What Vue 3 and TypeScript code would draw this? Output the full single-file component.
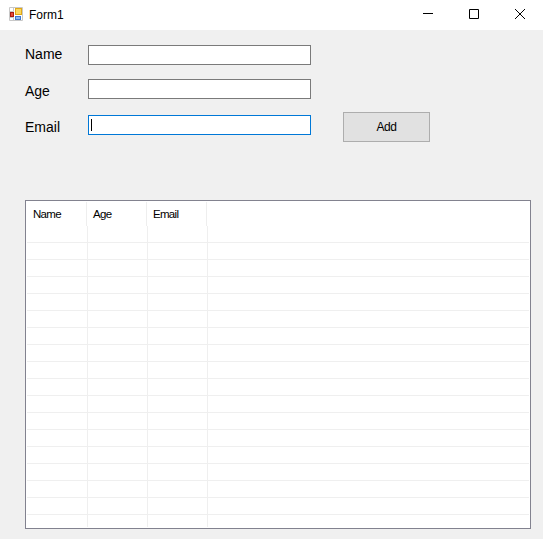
<template>
  <div class="window">
    <div class="titlebar">
      <svg class="app-icon" width="16" height="16" viewBox="0 0 16 16">
        <path d="M1.5 1.5h13v13h-13z M1.5 5.5h4 M5.5 1.5v4 M1.5 11.5h4 M5.5 11.5v3" fill="none" stroke="#c8c8c8" />
        <rect x="7" y="2" width="7" height="7" fill="#e0a818" />
        <rect x="8" y="3" width="5" height="5" fill="#fbd75e" />
        <rect x="2" y="6" width="4" height="5" fill="#a81c14" />
        <rect x="3" y="7" width="2" height="3" fill="#e84a36" />
        <rect x="7" y="10" width="6" height="4" fill="#3f78d0" />
        <rect x="8" y="11" width="4" height="2" fill="#8fb8ee" />
      </svg>
      <span class="title">Form1</span>
      <div class="controls">
        <button class="control">
          <svg width="12" height="12" viewBox="0 0 12 12"><path d="M1 5.5h10" stroke="#000" fill="none" /></svg>
        </button>
        <button class="control">
          <svg width="12" height="12" viewBox="0 0 12 12"><path d="M1.5 1.5h9v9h-9z" stroke="#000" fill="none" /></svg>
        </button>
        <button class="control">
          <svg width="12" height="12" viewBox="0 0 12 12"><path d="M1 1l10 10M11 1L1 11" stroke="#000" fill="none" /></svg>
        </button>
      </div>
    </div>

    <div class="content">
      <div class="form">
        <div v-for="field in fields" :key="field" class="field">
          <label class="label">{{ field }}</label>
          <div class="input" :class="{ focused: field === 'Email' }">
            <span v-if="field === 'Email'" class="caret"></span>
          </div>
          <button v-if="field === 'Email'" class="add">Add</button>
        </div>
      </div>

      <div class="list">
        <div class="list-inner">
          <div class="list-head">
            <div v-for="field in fields" :key="field" class="head-cell">{{ field }}</div>
          </div>
          <div v-for="row in 18" :key="row" class="list-row">
            <div v-for="col in 3" :key="col" class="row-cell"></div>
          </div>
        </div>
      </div>
    </div>
  </div>
</template>

<script setup lang="ts">
const fields: string[] = ["Name", "Age", "Email"];
</script>

<style scoped>
.window {
  width: 543px;
  height: 539px;
  display: flex;
  flex-direction: column;
  background: #f0f0f0;
  font-family: "Liberation Sans", Arial, sans-serif;
  color: #000;
  overflow: hidden;
}

.titlebar {
  height: 30px;
  flex: none;
  display: flex;
  align-items: center;
  background: #fff;
  padding-left: 8px;
}

.app-icon {
  flex: none;
  margin-top: -2px;
}

.title {
  margin-left: 5px;
  font-size: 12px;
  margin-top: -1px;
}

.controls {
  margin-left: auto;
  display: flex;
  height: 100%;
}

.control {
  width: 46px;
  height: 100%;
  padding: 0 0 2px;
  border: 0;
  background: none;
  display: flex;
  align-items: center;
  justify-content: center;
}

.content {
  flex: 1;
  padding: 15px 12px 0 25px;
  display: flex;
  flex-direction: column;
}

.form {
  display: flex;
  flex-direction: column;
  gap: 14px;
  height: 155px;
  flex: none;
}

.field {
  display: flex;
  align-items: center;
  height: 20px;
}

.field:last-child {
  margin-top: 2px;
}

.label {
  width: 63px;
  font-size: 14px;
  line-height: 20px;
  margin-top: -2px;
}

.field:not(:first-child) .label {
  margin-top: 4px;
}

.input {
  width: 223px;
  height: 20px;
  box-sizing: border-box;
  border: 1px solid #7a7a7a;
  background: #fff;
  display: flex;
  align-items: center;
  padding-left: 2px;
}

.input.focused {
  border-color: #0078d7;
}

.caret {
  width: 1px;
  height: 12px;
  background: #000;
}

.add {
  width: 87px;
  height: 30px;
  flex: none;
  margin-left: 32px;
  margin-top: 4px;
  padding: 0;
  box-sizing: border-box;
  border: 1px solid #adadad;
  background: #e1e1e1;
  font-family: inherit;
  font-size: 12px;
  letter-spacing: -0.5px;
  color: #000;
}

.list {
  width: 506px;
  height: 329px;
  flex: none;
  box-sizing: border-box;
  border: 1px solid #82828f;
  padding: 1px;
  background: #fff;
}

.list-inner {
  height: 100%;
  overflow: hidden;
}

.list-head {
  display: flex;
  height: 24px;
  box-sizing: border-box;
  background: #fff;
}

.head-cell {
  width: 60px;
  box-sizing: border-box;
  padding-left: 6px;
  border-right: 1px solid #eeeeee;
  font-size: 11.5px;
  letter-spacing: -0.7px;
  line-height: 25px;
  color: #000;
}

.list-row {
  display: flex;
  height: 17px;
  box-sizing: border-box;
  border-bottom: 1px solid #efefef;
}

.row-cell {
  width: 60px;
  box-sizing: border-box;
  border-right: 1px solid #efefef;
}

.row-cell:first-child {
  width: 61px;
}
</style>

<style>
html,
body {
  margin: 0;
  background: #f0f0f0;
}
</style>
